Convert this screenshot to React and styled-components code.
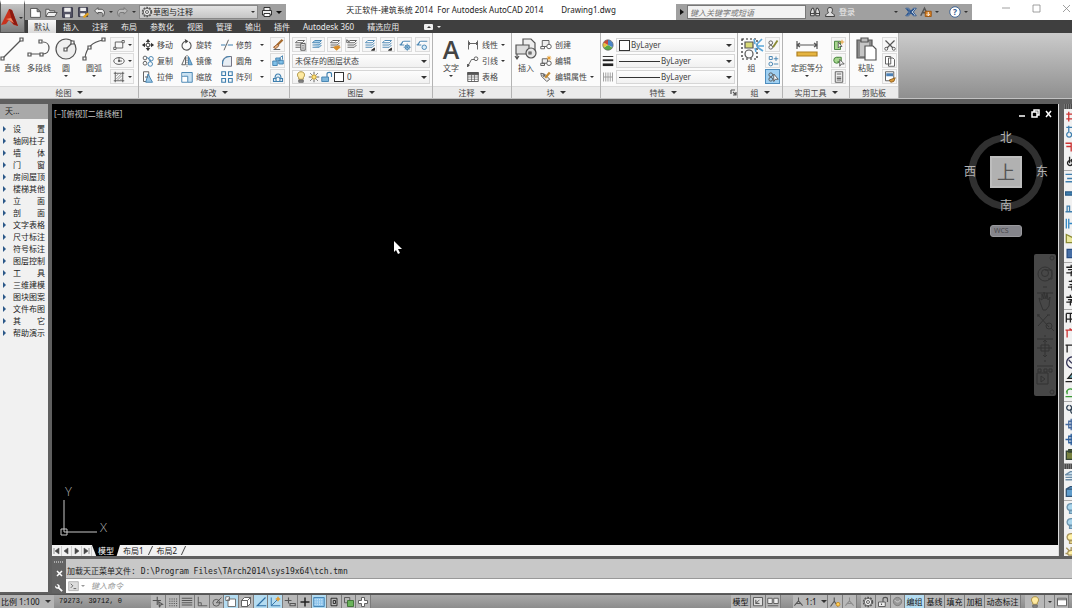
// App.jsx
import React from "react";
import styled, { createGlobalStyle } from "styled-components";

const GlobalStyle = createGlobalStyle`
  * {
    box-sizing: border-box;
  }

  body {
    margin: 0;
    background: #5f5f5f;
    font-family: "Noto Sans", "Noto Sans CJK SC", sans-serif;
    font-size: 8px;
    line-height: 12px;
    color: #444;
  }

  button,
  input,
  select {
    margin: 0;
    padding: 0;
    border: 0;
    background: none;
    color: inherit;
    font: inherit;
    min-width: 0;
  }
`;

const Window = styled.div`
  height: 100vh;
  display: flex;
  flex-direction: column;
`;

/* ---------- shared ---------- */

const Svg = styled.svg`
  display: block;
  flex: none;
  width: ${(p) => p.$w || 14}px;
  height: ${(p) => p.$h || p.$w || 14}px;
  fill: none;
  stroke: #555;
  stroke-width: 1.2;
`;

const Caret = styled.span`
  flex: none;
  width: 0;
  height: 0;
  border: solid transparent;
  border-width: ${(p) => (p.$small ? 2 : 3)}px;
  border-top-color: ${(p) => p.$color || "#333"};
  border-bottom-width: 0;
`;

const B = "#3f7fae";

const icons = {
  newFile: <path d="M2 3h8l4 4v7H2z M10 3v4h4" fill="#fff" />,
  open: <path d="M1 13V4h4l1 2h6v2 M1 13l3-5h11l-3 5z" fill="#eee" />,
  save: (
    <>
      <path d="M2 2h12v12H2z" fill="#556" stroke="#334" />
      <path d="M4 2h8v5H4z M5 10h6v4H5z" fill="#eee" stroke="none" />
    </>
  ),
  saveAs: (
    <>
      <path d="M2 2h11v11H2z" fill="#556" stroke="#334" />
      <path d="M4 2h7v4H4z M4 9h6v4H4z" fill="#eee" stroke="none" />
      <path d="M8 14l6-5" stroke="#e0a020" strokeWidth="3" />
    </>
  ),
  undo: <path d="M6 2L2 6l4 4V8h4c2 0 3 2 2 5 4-3 2-9-2-9H6z" fill="#eee" />,
  redo: <path d="M10 2l4 4-4 4V8H6c-2 0-3 2-2 5-4-3-2-9 2-9h4z" fill="#bbb" stroke="#777" />,
  gear: (
    <>
      <circle cx="8" cy="8" r="6" strokeDasharray="2.4 1.4" strokeWidth="2" />
      <circle cx="8" cy="8" r="5" fill="#eee" />
      <circle cx="8" cy="8" r="2" />
    </>
  ),
  print: (
    <>
      <path d="M4 6V2h8v4 M2 6h12v6H2z" fill="#eee" stroke="#222" />
      <path d="M4 10h8v4H4z" fill="#fff" stroke="#222" />
    </>
  ),
  binoculars: <path d="M2 13V8l2-5h2l1 4v6z M14 13V8l-2-5h-2l-1 4v6z M7 8h2 M2 10h5 M9 10h5" fill="#ddd" stroke="#333" />,
  user: <path d="M8 2c5 0 3 6 2 7 1 1 4 1 4 5H2c0-4 3-4 4-5-1-1-3-7 2-7z" fill="#ddd" stroke="#333" />,
  exchange: (
    <>
      <path d="M1 3h4l3 4 3-4h4l-4 5 4 5h-4L8 9l-3 4H1l4-5z" fill="#fff" stroke="#27518a" />
      <path d="M3 4l9 8 M12 4l-9 8" stroke="#27518a" strokeWidth="2" />
    </>
  ),
  connect: (
    <>
      <path d="M1 13L6 3l3 6 M4 9h4" stroke="#555" strokeWidth="2" />
      <path d="M7 7h8v7H7z" fill="#d98324" stroke="#995211" />
      <path d="M11 8v4 M9 11l2 2 2-2" stroke="#fff" />
    </>
  ),
  line: (
    <>
      <path d="M3 21L21 3" />
      <path d="M1 20h3v3H1z M20 1h3v3h-3z" fill="#fff" />
    </>
  ),
  pline: (
    <>
      <path d="M3 17h13c8 0 8-12 0-12" />
      <path d="M1 16h3v3H1z M13 16h3v3h-3z M12 3h3v3h-3z" fill="#fff" />
    </>
  ),
  circle: (
    <>
      <circle cx="12" cy="12" r="10" fill="#efefef" />
      <path d="M12 12l6-6" />
      <path d="M10 11h3v3h-3z M17 4h3v3h-3z" fill="#fff" />
    </>
  ),
  arc: (
    <>
      <path d="M3 21C4 12 10 5 21 3" />
      <path d="M1 20h3v3H1z M6 9h3v3H6z M20 1h3v3h-3z" fill="#fff" />
    </>
  ),
  rect: (
    <>
      <path d="M3 4h10v8H3z" />
      <path d="M1 11h3v3H1z M12 2h3v3h-3z" fill="#fff" />
    </>
  ),
  ellipse: (
    <>
      <ellipse cx="8" cy="8" rx="7" ry="4.5" />
      <path d="M8 3v5h4" />
      <circle cx="8" cy="8" r="1" fill="#444" />
    </>
  ),
  hatch: (
    <>
      <path d="M3 1v14 M13 1v14 M1 3h14 M1 13h14" />
      <path d="M4 7l3-3 M4 11l7-7 M6 12l6-6 M10 12l2-2" strokeWidth=".8" />
    </>
  ),
  move: (
    <>
      <path d="M8 1v14 M1 8h14" strokeWidth="1.6" />
      <path d="M8 0l3 4H5z M8 16l3-4H5z M0 8l4-3v6z M16 8l-4-3v6z" fill="#333" stroke="none" />
      <path d="M6 6h4v4H6z" fill="#fff" />
    </>
  ),
  rotate: (
    <>
      <path d="M6 3a6 6 0 1 0 5 1" strokeWidth="1.5" />
      <path d="M5 0l5 3-4 3z" fill="#444" stroke="none" />
    </>
  ),
  trim: (
    <>
      <path d="M0 8h6 M9 8h7" stroke={B} strokeWidth="1.5" />
      <path d="M4 15L10 1" />
    </>
  ),
  copy: (
    <>
      <circle cx="4" cy="4" r="2.5" />
      <circle cx="4" cy="11" r="2.5" />
      <circle cx="12" cy="5" r="3" stroke={B} />
      <circle cx="11" cy="12" r="3" stroke={B} />
      <path d="M6 3l5 3v3" stroke={B} />
    </>
  ),
  mirror: (
    <>
      <path d="M6 2v11H1z" />
      <path d="M10 2v11h5z" fill="#7fb2d6" stroke={B} />
      <path d="M8 0v16" strokeDasharray="2 1" />
    </>
  ),
  fillet: (
    <>
      <path d="M2 15V10C2 5 6 2 10 2h4v13z" fill="#e8eef4" stroke="#667" />
      <path d="M2 12C2 6 6 2 12 2" stroke={B} strokeWidth="1.5" />
    </>
  ),
  stretch: (
    <>
      <path d="M2 1h7v13H2z" />
      <path d="M8 4l6 11H5z" fill="#9cc8e6" stroke={B} />
      <path d="M4 8h4" />
    </>
  ),
  scale: (
    <>
      <path d="M1 2h14v13H9" stroke={B} fill="#c9e2f3" />
      <path d="M1 7h8v8H1z" fill="#fff" stroke={B} />
      <path d="M1 2v5" stroke={B} />
    </>
  ),
  array: <path d="M1 1h5v5H1z M10 1h5v5h-5z M1 10h5v5H1z M10 10h5v5h-5z" stroke={B} strokeWidth="1.5" />,
  erase: (
    <>
      <path d="M14 1L7 8" stroke="#a66a2c" strokeWidth="3" />
      <path d="M7 7l2 2-4 4-3-2z" fill="#e9b27c" stroke="#8a4c20" />
      <path d="M2 14h9" />
    </>
  ),
  explode: (
    <>
      <path d="M1 8h6v6H1z M9 7h6v5H9z M5 4h6v3H5z" fill="#7fc0e8" stroke={B} />
      <path d="M10 4l4-3v5" stroke={B} />
    </>
  ),
  offset: <path d="M2 14h12V10h-2c0-8-8-8-8 0H2z M6 14c-2-3 0-6 2-6s4 3 2 6" stroke={B} strokeWidth="1.5" fill="#e4f0f8" />,
  sun: (
    <>
      <circle cx="8" cy="8" r="3" fill="#ffe27a" stroke="#a98220" />
      <path d="M8 1v3 M8 12v3 M1 8h3 M12 8h3 M3 3l2 2 M11 11l2 2 M13 3l-2 2 M5 11l-2 2" />
    </>
  ),
  bulb: (
    <>
      <path d="M8 1c5 0 6 5 3 8v2H5V9C2 6 3 1 8 1z" fill="#ffeaa0" stroke="#a58a3a" />
      <path d="M5 12h6v3H5z" fill="#888" stroke="#666" />
    </>
  ),
  unlock: (
    <>
      <path d="M1 8h9v6H1z" fill="#7fb7dc" stroke={B} />
      <path d="M8 8V4c0-3 6-3 6 0v4" stroke={B} strokeWidth="1.5" />
    </>
  ),
  unlockGray: (
    <>
      <path d="M2 8h9v6H2z" fill="#eee" />
      <path d="M8 8V4c0-3 6-3 6 0v4 M6 10v2" strokeWidth="1.5" />
    </>
  ),
  dim: <path d="M2 2v12 M14 2v12 M2 6h12 M4 4L2 6l2 2 M12 4l2 2-2 2" />,
  leader: (
    <>
      <path d="M1 15l5-9h4" />
      <path d="M0 16l1-4 2 2z" fill="#444" />
      <circle cx="12" cy="5" r="2.5" />
    </>
  ),
  table: (
    <>
      <path d="M1 2h14v12H1z" fill="#fff" />
      <path d="M1 2h14v3H1z" fill="#555" />
      <path d="M1 8h14 M1 11h14 M6 5v9 M10 5v9" strokeWidth=".9" />
    </>
  ),
  insert: (
    <>
      <path d="M9 2h8l4 4v8H9z" fill="#eee" />
      <path d="M2 8h13v9H2z" fill="#ddd" />
      <circle cx="17" cy="16" r="5" fill="#e6e6e6" />
      <path d="M3 17v4 M1 19l2 3 2-3 M15 15h2v2h-2z" />
    </>
  ),
  create: (
    <>
      <path d="M3 2h9v8H3z" fill="#eee" />
      <circle cx="12" cy="10" r="3" fill="#fff" />
      <path d="M1 10h5v3H1z" fill="#fff" />
    </>
  ),
  editBlock: (
    <>
      <path d="M3 5h7v6H3z M1 11h5v3H1z" fill="#eee" />
      <circle cx="12" cy="11" r="3" fill="#fff" />
      <path d="M12 1v6 M9 4h6 M10 2l4 4 M14 2l-4 4" stroke="#e39a2d" />
    </>
  ),
  editAttr: (
    <>
      <path d="M1 3l5 1 7 7-4 3-7-7z" fill="#eee" />
      <path d="M13 2L7 9" stroke="#c58a30" strokeWidth="3" />
      <path d="M4 5h2v2H4z" />
    </>
  ),
  wheel: (
    <>
      <path d="M8 8V1a7 7 0 0 1 6 10z" fill="#4a86c8" stroke="none" />
      <path d="M8 8l6 3.5A7 7 0 0 1 2 11.5z" fill="#5aa845" stroke="none" />
      <path d="M8 8L2 11.5A7 7 0 0 1 2 4.5z" fill="#e7c33a" stroke="none" />
      <path d="M8 8L2 4.5A7 7 0 0 1 8 1z" fill="#c94b38" stroke="none" />
      <circle cx="8" cy="8" r="7" strokeWidth=".8" />
    </>
  ),
  weight: (
    <>
      <path d="M1 2h14" stroke="#222" />
      <path d="M1 7h14" strokeWidth="2.5" stroke="#222" />
      <path d="M1 13h14" strokeWidth="3.5" stroke="#222" />
    </>
  ),
  linetype: <path d="M2 2v12 M5 2v12 M8 2v12 M11 2v12 M14 2v12 M2 8h12" stroke="#999" />,
  group: (
    <>
      <path d="M2 2h15v20H2z" strokeDasharray="2 2" stroke="#222" />
      <path d="M5 5h8v6H5z" fill="#d9da77" />
      <circle cx="9" cy="17" r="4" />
      <path d="M16 8l6-6 M16 9h8 M17 10l6 4 M15 7l-1-5 M15 11l1 4" stroke="#5ba6d8" strokeWidth="1.6" />
    </>
  ),
  groupEdit: (
    <>
      <circle cx="5" cy="5" r="2.5" />
      <circle cx="5" cy="11" r="2.5" />
      <path d="M14 2L8 11" stroke="#8b8b35" strokeWidth="2.5" />
    </>
  ),
  groupAdd: (
    <>
      <path d="M3 2h4v4H3z" stroke={B} />
      <circle cx="5" cy="12" r="2.5" stroke={B} />
      <path d="M12 2v6 M9 5h6 M9 12h6" stroke={B} />
    </>
  ),
  groupSelect: (
    <>
      <circle cx="5" cy="5" r="2.5" />
      <circle cx="5" cy="11" r="2.5" />
      <path d="M9 4v10l2-3h4z" fill="#fff" />
    </>
  ),
  measure: (
    <>
      <path d="M2 4v8 M22 4v8 M2 8h20 M5 6L2 8l3 2 M19 6l3 2-3 2" />
      <path d="M2 15h20v4H2z" fill="#e5b440" stroke="#b08020" />
    </>
  ),
  quickSelect: (
    <>
      <path d="M2 3h8v11H2z" fill="#a6d68e" stroke="#3f7d35" />
      <path d="M7 4v8l2-2h3z" fill="#fff" />
      <path d="M12 1v6 M9 4h6" stroke="#e39a2d" />
    </>
  ),
  selectSimilar: (
    <>
      <circle cx="5" cy="7" r="4" fill="#a6d68e" stroke="#3f7d35" />
      <path d="M5 3h6v6H6" fill="#a6d68e" stroke="#3f7d35" />
      <path d="M9 6v9l2-3h4z" fill="#fff" />
    </>
  ),
  calc: (
    <>
      <path d="M3 1h10v14H3z" fill="#f2f2f2" />
      <path d="M5 4h6 M5 8h6 M5 10h6 M5 12h6" />
    </>
  ),
  paste: (
    <>
      <path d="M3 3h15v18H3z" fill="#8a8a8a" />
      <path d="M6 5h9v14H6z" fill="#c5c5c5" stroke="none" />
      <path d="M7 1h7v4H7z" fill="#bbb" />
      <path d="M11 9h8l3 3v11H11z" fill="#fff" />
    </>
  ),
  cut: (
    <>
      <path d="M2 2l10 10 M14 2L4 12" strokeWidth="1.6" />
      <circle cx="3" cy="13" r="2" />
      <circle cx="13" cy="13" r="2" />
    </>
  ),
  pages: <path d="M2 2h7v10H2z M6 4h6l2 2v9H6z" fill="#fff" />,
  matchProps: (
    <>
      <path d="M2 1h11v12H2z" fill="#fff" />
      <path d="M3 3h9v4H3z" fill="#4b80b5" stroke="none" />
      <path d="M7 12l8-3-2 5-4 1z" fill="#d99a3c" stroke="#8f5f1d" />
    </>
  ),
  snap: <path d="M1 6h11 M7 1v11 M9 8l5 3-3 1-1 3z" fill="#eee" strokeWidth="1.5" />,
  dots: <path d="M3 4h11 M3 7h11 M3 10h11 M3 13h11" strokeDasharray="1.5 1.5" strokeWidth="1.5" />,
  gridLines: <path d="M1 3h14 M1 6h14 M1 9h14 M1 12h14" strokeWidth="1.5" />,
  ortho: <path d="M3 1v12h12 M3 9h4v4" />,
  polar: (
    <>
      <circle cx="7" cy="9" r="4.5" />
      <path d="M7 9l7-7 M7 9h8" />
    </>
  ),
  osnap: <path d="M4 4h10v10H4z M1 1h5v5H1z" fill="#fff" stroke="#666" />,
  osnap3d: <path d="M2 6h8v8H2z M2 6l4-4h8v8l-4 4 M10 6l4-4" fill="#fff" />,
  track: <path d="M14 2L3 13h12" strokeWidth="1.5" stroke="#2d6da3" />,
  ducs: (
    <>
      <path d="M3 2v11h12 M3 13l9-9" stroke="#2d6da3" />
      <path d="M12 1v6 M9 4h6" stroke="#e39a2d" strokeWidth="2" />
    </>
  ),
  dyn: <path d="M1 6h9 M6 2v8 M8 10h7v3H8z" strokeWidth="1.5" />,
  plus: <path d="M8 2v12 M2 8h12" strokeWidth="2" stroke="#222" />,
  transparency: (
    <>
      <path d="M1 2h14v12H1z" fill="#8cc4ec" stroke={B} />
      <path d="M2 5h12 M2 8h12 M2 11h12" stroke="#e7f4fc" strokeDasharray="1.5 1.5" />
    </>
  ),
  props: <path d="M4 3h8v10H4z M7 6h3v4H7z" stroke="#222" />,
  cycle: (
    <>
      <path d="M2 2h7v7H2z" />
      <path d="M6 6h8v8H6z" fill="#6ab35a" stroke="#3a6f31" />
    </>
  ),
  cross: <path d="M6 2h4v4h4v4h-4v4H6v-4H2V6h4z" fill="#fff" />,
  modelSpace: <path d="M2 2h12v11H2z M5 5v5h5 M5 10l5-5" fill="#ddd" />,
  viewports: <path d="M1 3h6v7H1z M9 3h6v7H9z M1 13h14" fill="#eee" />,
  person: <path d="M8 2v5 M8 7L2 14 M8 7l6 7 M4 11h8" strokeWidth="1.5" />,
  personFaded: <path d="M8 2v5 M8 7L2 14 M8 7l6 7 M4 11h8" strokeWidth="1.5" stroke="#8c8c8c" />,
  personStar: (
    <>
      <path d="M7 2v5 M7 7L2 14 M7 7l5 7" strokeWidth="1.5" />
      <circle cx="12" cy="11" r="2.5" fill="#ffcf5a" stroke="#c98e24" />
    </>
  ),
  sphere: (
    <>
      <circle cx="8" cy="8" r="6" fill="#999" stroke="#777" />
      <path d="M4 6c3 4 6 3 8 0" stroke="#ddd" />
    </>
  ),
  clean: <path d="M2 3h12v10H2z M2 5h12" fill="#fff" />,
  wrench: <path d="M4 2l3 3-2 2-3-3c-1 4 2 6 5 5l5 5 2-2-5-5c1-3-1-6-5-5z" fill="#fff" stroke="none" />,
  prompt: (
    <>
      <path d="M1 1h14v13H1z" fill="#ddd" stroke="#aaa" />
      <path d="M4 4l3 3-3 3 M8 11h4" />
    </>
  ),
};

const Icon = ({ name, w, h, box = 16 }) => (
  <Svg $w={w} $h={h} viewBox={`0 0 ${box} ${box}`} aria-hidden="true">
    {icons[name]}
  </Svg>
);

/* ---------- title bar ---------- */

const Header = styled.header`
  flex: none;
  display: grid;
  grid-template-columns: 25px 1fr;
  grid-template-rows: 20px 13px;
  background: #3f3f3f;
`;

const AppButton = styled.button`
  grid-row: 1 / 3;
  display: flex;
  align-items: center;
  gap: 1px;
  border: 1px solid #555;
  border-top: 4px solid #fff;
  background: linear-gradient(#c4c4c4, #7c7c7c);
`;

const TitleRow = styled.div`
  display: flex;
  align-items: stretch;
  padding-top: 4px;
  background: #fff;
`;

const ToolStrip = styled.div`
  display: flex;
  align-items: center;
  gap: 3px;
  padding: 0 4px;
  background: #a0a0a0;
  color: #eee;
`;

const ToolButton = styled.button`
  display: flex;
  align-items: center;
  gap: 3px;
`;

const Workspace = styled.label`
  display: flex;
  align-items: center;
  width: 119px;
  height: 14px;
  padding: 0 2px 0 1px;
  background: linear-gradient(#e4e4e4, #c6c6c6);
  border: 1px solid #888;
  color: #222;
`;

const BareSelect = styled.select`
  flex: 1;
  appearance: none;
  outline: none;
  height: 12px;
`;

const Title = styled.h1`
  flex: 1;
  margin: 0;
  display: flex;
  justify-content: center;
  gap: 18px;
  font-size: 8px;
  line-height: 12px;
  font-weight: 400;
  color: #222;
  white-space: pre;
`;

const SearchInput = styled.input`
  width: 119px;
  height: 14px;
  padding: 0 2px;
  background: #f2f2f2;
  border: 1px solid #777;
  font-style: italic;

  &::placeholder {
    color: #777;
  }
`;

const Spacer = styled.span`
  flex: ${(p) => (p.$w ? "none" : 1)};
  width: ${(p) => p.$w || 0}px;
`;

const WindowButtons = styled.div`
  display: flex;
  justify-content: space-between;
  align-items: center;
  width: 100px;
  padding: 0 1px 8px 30px;
`;

const Tabs = styled.nav`
  display: flex;
  gap: 1px;
  padding-left: 3px;
`;

const Tab = styled.button`
  padding: 0 6px;
  height: 13px;
  white-space: nowrap;
  color: ${(p) => (p.$active ? "#333" : "#ececec")};
  background: ${(p) => (p.$active ? "linear-gradient(#f8f8f8, #d8d8d8)" : "none")};
`;

const TabToggle = styled.button`
  display: flex;
  align-items: center;
  gap: 4px;
  margin-left: 18px;
`;

/* ---------- ribbon ---------- */

const Ribbon = styled.section`
  flex: none;
  display: flex;
  height: 66px;
  background: linear-gradient(#cbcbcb, #8f8f8f);
  border-bottom: 1px solid #c2c2c2;
`;

const Panel = styled.div`
  width: ${(p) => p.$w}px;
  display: flex;
  flex-direction: column;
  background: #fbfbfb;
  border-right: 1px solid #b4b4b4;
`;

const PanelBody = styled.div`
  flex: 1;
  display: flex;
  padding: 4px ${(p) => p.$right || 2}px 0 ${(p) => p.$left || 0}px;
`;

const PanelTitle = styled.button`
  height: 12px;
  display: flex;
  align-items: center;
  gap: 5px;
  background: #ebebeb;
  border-top: 1px solid #dadada;
`;

const BigButton = styled.button`
  width: ${(p) => p.$w || 28}px;
  flex: none;
  height: 44px;
  display: flex;
  flex-direction: column;
  align-items: center;
  white-space: nowrap;
`;

const BigLabel = styled.span`
  height: 14px;
  line-height: 14px;
`;

const Column = styled.div`
  display: flex;
  flex-direction: column;
  flex: ${(p) => (p.$w ? "none" : 1)};
  width: ${(p) => (p.$w ? `${p.$w}px` : "auto")};
`;

const Row = styled.div`
  height: 16px;
  display: flex;
  align-items: center;
  justify-content: space-between;
`;

const SmallButton = styled.button`
  height: 16px;
  display: flex;
  align-items: center;
  gap: 3px;
  white-space: nowrap;
`;

const SquareButton = styled.button`
  width: ${(p) => p.$w || 15}px;
  height: 15px;
  margin-bottom: 1px;
  display: flex;
  align-items: center;
  justify-content: center;
  gap: 3px;
  border: 1px solid ${(p) => (p.$active ? "#4e8dbd" : "#dcdcdc")};
  background: ${(p) => (p.$active ? "#9fd0f2" : "#f7f7f7")};
`;

const Combo = styled.label`
  flex: 1;
  height: 14px;
  display: flex;
  align-items: center;
  gap: 1px;
  padding: 0 2px;
  border: 1px solid #d6d6d6;
  background: linear-gradient(#fdfdfd, #f1f1f1);
`;

const Swatch = styled.span`
  width: ${(p) => p.$w || 11}px;
  height: ${(p) => p.$w || 11}px;
  background: #fff;
  border: 1px solid #333;
`;

const LineSample = styled.span`
  width: 41px;
  height: 1px;
  background: #333;
`;

const BigA = styled.span`
  height: 24px;
  font: 600 25px/24px "Open Sans", sans-serif;
  color: #444;
`;

const Big = ({ icon, label, w, caret }) => (
  <BigButton $w={w}>
    <Icon name={icon} w={24} box={24} />
    <BigLabel>{label}</BigLabel>
    {caret && <Caret $small />}
  </BigButton>
);

const Small = ({ icon, label, caret, wide }) => (
  <SmallButton>
    <Icon name={icon} w={12} />
    {label}
    {wide && <Spacer $w={2} />}
    {caret && <Caret $small />}
  </SmallButton>
);

const Squares = ({ items, w = 15, active, caret }) => (
  <Column $w={w}>
    {items.map((n) => (
      <SquareButton key={n} $w={w} $active={n === active} aria-label={n}>
        <Icon name={n} w={12} />
        {caret && <Caret $small />}
      </SquareButton>
    ))}
  </Column>
);

const PanelFoot = ({ text, plain, launcher }) => (
  <PanelTitle>
    <Spacer />
    {text}
    {!plain && <Caret />}
    <Spacer />
    {launcher && (
      <Svg $w={7} viewBox="0 0 7 7">
        <path d="M1 1h4 M1 1v4 M3 3l3 3 M6 3v3H3" />
      </Svg>
    )}
  </PanelTitle>
);

const layerTones = ["#555", B, "#d98f2b", "#555", B, B, B, B];

const tabNames = ["默认", "插入", "注释", "布局", "参数化", "视图", "管理", "输出", "插件", "Autodesk 360", "精选应用"];

/* ---------- body ---------- */

const Body = styled.main`
  flex: 1;
  min-height: 0;
  display: flex;
  margin-top: 5px;
`;

const Sidebar = styled.aside`
  width: 48px;
  flex: none;
  margin-right: 4px;
  margin-bottom: 2px;
  background: #f1f1f1;
`;

const SidebarTitle = styled.div`
  height: 15px;
  padding: 1px 5px;
  background: #a9a9a9;
  color: #222;
`;

const Menu = styled.ul`
  list-style: none;
  margin: 0;
  padding: 4px 0 0;
`;

const MenuButton = styled.button`
  width: 100%;
  height: 12px;
  display: flex;
  align-items: center;
  gap: 7px;
  padding-left: 3px;
  color: #222;
  white-space: nowrap;

  &::before {
    content: "";
    border: 3px solid transparent;
    border-left-color: #2b5788;
    border-right-width: 0;
  }
`;

const Work = styled.div`
  flex: 1;
  min-width: 0;
  display: flex;
  flex-direction: column;
`;

const DrawingRow = styled.div`
  flex: 1;
  display: flex;
  gap: 5px;
  min-height: 0;
`;

const Drawing = styled.div`
  flex: 1;
  display: flex;
  flex-direction: column;
  border-right: 1px solid #ddd;
`;

const Canvas = styled.div`
  position: relative;
  flex: 1;
  background: #000;
  color: #c4c4c4;
`;

const ViewLabel = styled.div`
  padding: 4px 2px;
`;

const ViewButtons = styled.div`
  position: absolute;
  top: 5px;
  right: 6px;
`;

const ViewCube = styled.div`
  position: absolute;
  top: 26px;
  right: 10px;
  width: 84px;
  height: 84px;
  display: grid;
  grid-template: 26px 32px 26px / 26px 32px 26px;
  place-items: center;
  font-size: 12px;
  line-height: 16px;
  color: #b4b4b4;
`;

const CubeRing = styled.svg`
  grid-area: 1 / 1 / 4 / 4;
  width: 84px;
  height: 84px;
`;

const CubeLabel = styled.span`
  grid-area: ${(p) => p.$area};
  align-self: ${(p) => p.$v || "center"};
  justify-self: ${(p) => p.$h || "center"};
`;

const CubeFace = styled.button`
  grid-area: 2 / 2;
  width: 32px;
  height: 32px;
  background: #b1b1b1;
  border: 2px solid #bdbdbd;
  color: #555;
  font-size: 18px;
  line-height: 24px;
`;

const Wcs = styled.button`
  position: absolute;
  top: 121px;
  right: 36px;
  width: 32px;
  height: 12px;
  padding-left: 3px;
  border-radius: 3px;
  background: #85858b;
  border: 1px solid #9a9a9e;
  color: #4a4a4e;
  font-size: 7px;
  line-height: 10px;
  text-align: left;
`;

const NavBar = styled.svg`
  position: absolute;
  top: 150px;
  right: 2px;
  width: 22px;
  height: 142px;
  fill: none;
  stroke: #333;
`;

const Pointer = styled.svg`
  position: absolute;
  top: 137px;
  left: 342px;
  width: 8px;
  height: 14px;
`;

const Ucs = styled.svg`
  position: absolute;
  left: 8px;
  bottom: 7px;
  width: 54px;
  height: 60px;
  fill: none;
  stroke: #c8c8c8;

  text {
    fill: #b0b0b0;
    stroke: none;
    font: 300 13px "Open Sans", sans-serif;
  }
`;

const LayoutTabs = styled.div`
  height: 11px;
  display: flex;
  align-items: center;
  background: #f1f1f1;
  color: #222;
`;

const LayoutTab = styled.button`
  height: 11px;
  line-height: 11px;
  padding: 0 ${(p) => (p.$active ? 6 : 3)}px;
  background: ${(p) => (p.$active ? "#000" : "none")};
  color: ${(p) => (p.$active ? "#fff" : "#222")};
  clip-path: ${(p) => (p.$active ? "polygon(0 0, 100% 0, 88% 100%, 15% 100%)" : "none")};
`;

const Slash = styled.span`
  width: 1px;
  height: 9px;
  margin: 0 3px;
  background: #444;
  transform: skewX(-25deg);
`;

const StepButton = styled.button`
  width: 10px;
  height: 10px;
  border-right: 1px solid #ccc;
`;

const SideTools = styled.div`
  width: 8px;
  flex: none;
  overflow: hidden;
  background: #f1f1f1;
`;

const Grip = styled.div`
  height: 5px;
  background: repeating-linear-gradient(90deg, #777 0 1px, #4c4c4c 1px 2px);
`;

const ToolGroup = styled.div`
  padding-bottom: 1px;
  border-bottom: 1px solid #aaa;
`;

const SideTool = styled.button`
  display: block;
  width: 16px;
  height: 15px;
  padding-left: 1px;
`;

const CommandPanel = styled.div`
  flex: none;
  display: flex;
  margin-top: 3px;
  height: 35px;
  padding-bottom: 1px;
`;

const CommandGrip = styled.div`
  width: 14px;
  display: flex;
  flex-direction: column;
  align-items: center;
  justify-content: space-between;
  padding: 2px 0 0;
  background: #636363;
`;

const CommandBody = styled.div`
  flex: 1;
  display: flex;
  flex-direction: column;
`;

const History = styled.div`
  height: 20px;
  padding: 7px 1px 0;
  background: #c8c8c8;
  border-bottom: 1px solid #999;
  color: #222;
  font-family: "DejaVu Sans Mono", "Noto Sans CJK SC", monospace;
`;

const Prompt = styled.label`
  flex: 1;
  display: flex;
  align-items: center;
  gap: 2px;
  padding-left: 2px;
  background: #fff;
`;

const CommandInput = styled.input`
  flex: 1;
  margin-left: 4px;
  outline: none;
  font-style: italic;

  &::placeholder {
    color: #999;
  }
`;

/* ---------- status bar ---------- */

const StatusBar = styled.footer`
  flex: none;
  height: 14px;
  display: flex;
  align-items: stretch;
  background: linear-gradient(#a9a9a9, #8c8c8c);
  border-top: 1px solid #555;
  color: #111;
  white-space: nowrap;
`;

const ScaleButton = styled.button`
  width: 54px;
  display: flex;
  align-items: center;
  justify-content: space-between;
  padding: 0 3px 0 1px;
  background: #b5b5b5;
`;

const Coords = styled.output`
  width: 97px;
  padding-left: 5px;
  font: 7px/13px "Liberation Mono", monospace;
`;

const Toggles = styled.div`
  width: 220px;
  display: flex;
`;

const StatusButton = styled.button`
  flex: ${(p) => (p.$w ? "none" : 1)};
  width: ${(p) => p.$w || 0}px;
  display: flex;
  align-items: center;
  justify-content: center;
  gap: 1px;
  background: ${(p) => (p.$active ? "#b4dcf1" : "#b8b8b8")};
  border-right: 1px solid #7c7c7c;
`;

const menu = [
  "设　　置", "轴网柱子", "墙　　体", "门　　窗", "房间屋顶", "楼梯其他",
  "立　　面", "剖　　面", "文字表格", "尺寸标注", "符号标注", "图层控制",
  "工　　具", "三维建模", "图块图案", "文件布图", "其　　它", "帮助演示",
];

const toggles = [
  ["snap"], ["dots"], ["gridLines"], ["ortho"], ["polar"],
  ["osnap", true], ["osnap3d"], ["track", true], ["ducs", true],
  ["dyn"], ["plus"], ["transparency", true], ["props"], ["cycle"], ["cross"],
];

// [stroke path, stroke colour, fill]
const R = "#c33";
const K = "#222";
const sideTools = [
  [
    ["M1 5h14 M1 11h14 M4 2v12 M11 2v12", R],
    ["M1 3h14 M4 1v8 M4 9a3 3 0 1 0 1 0", B],
    ["M0 4h7v4H1 M7 9v5", R],
    ["M5 2v8 M5 7a3 3 0 1 0 1 0 M7 5l5 8", K],
  ],
  [
    ["M0 3h14 M0 12h14 M2 8h8", B],
    ["M0 6h14v4H0z", "#2c5e8a", B],
    ["M0 12h14 M2 12V5h3v7", B],
    ["M1 2v12 M4 2v12 M5 8h6", "#3187c4"],
    ["M1 13V3l10 5v5z", "#8a8a35", "#e9e79c"],
    ["M2 3h12v10H2z", "#274d82", "#466ea5"],
  ],
  [
    ["M1 4h12 M7 1v3 M3 7h8L7 10v5 M1 11h12", K],
    ["M4 3h9 M8 1v3 M5 7h6L8 9v5 M3 10h10", K],
    ["M1 4h10 M6 1v3 M3 7h6L6 9v5 M1 10h10", K],
  ],
  [
    ["M1 3v11 M6 3v11 M1 10h13 M1 3h12", K],
    ["M0 5h14 M2 5v9 M5 3l5 4", R],
    ["M0 5h14 M2 5v9", K],
    ["M8 1a7 7 0 1 0 1 0 M4 5l4 4", "#335"],
    ["M0 13h14 M3 9l5-6 4 6z", K, "#6aa7b5"],
    ["M1 8c2-6 8-6 10 0 M0 13h14 M2 5v5", "#3b9b36"],
  ],
  [
    ["M4 3a3 3 0 1 0 1 0 M9 7a3 3 0 1 0 1 0", "#345"],
    ["M7 1v14 M0 8h14 M4 4h6v8H4z", "#456a9f"],
    ["M7 1v14 M0 8h14 M4 4h6v8H4z", "#2c5e9a"],
    ["M1 4h12v10H1z M4 2h6v3H4z", "#343", "#77813f"],
  ],
];

const sideTools2 = [
  [
    ["M0 6l6-4h8l-5 4z M0 9h9l5-3 M0 12h9l5-3", "#6a8ba5", "#c7dfef"],
    ["M1 5l5-3h8v8l-5 4H1z M1 5h8v9", "#357", "#5f9ccb"],
  ],
  [
    ["M7 2c6 0 6 6 3 8H4C1 8 1 2 7 2z M5 11h5v3H5z", "#6b93ad", "#a9d5ec"],
    ["M7 2c6 0 6 6 3 8H4C1 8 1 2 7 2z M5 11h5v3H5z", "#6b93ad", "#a9d5ec"],
    ["M7 2c6 0 6 6 3 8H4C1 8 1 2 7 2z M5 11h5v3H5z", "#a6935a", "#fff0a4"],
    ["M7 4c5 0 5 5 3 6H4C2 9 2 4 7 4z M1 1l3 3 M7 0v3 M0 8h2", "#a6935a", "#fff0a4"],
  ],
];

const ToolGroups = ({ groups }) =>
  groups.map((group, g) => (
    <ToolGroup key={g}>
      {group.map(([d, stroke, fill], i) => (
        <SideTool key={i} aria-label={`tool ${g + 1}-${i + 1}`}>
          <Svg $w={14} $h={13} viewBox="0 0 16 16">
            <path d={d} stroke={stroke} fill={fill || "none"} strokeWidth="1.6" />
          </Svg>
        </SideTool>
      ))}
    </ToolGroup>
  ));

const TitleBar = () => (
  <Header>
    <AppButton aria-label="menu">
      <Svg $w={17} $h={20} viewBox="0 0 17 20">
        <path d="M8 1L0 17l5-1 3-4 5 5 4 1L11 2z" fill="#c8321e" stroke="none" />
        <path d="M8 1l3 1 6 16-5-2z" fill="#8c1a10" stroke="none" />
        <path d="M5 11l5-1 3 5-5-3z" fill="#f08a68" stroke="none" />
      </Svg>
      <Caret $small />
    </AppButton>
    <TitleRow>
      <ToolStrip>
        {["newFile", "open", "save", "saveAs"].map((n) => (
          <ToolButton key={n} aria-label={n}>
            <Icon name={n} w={13} />
          </ToolButton>
        ))}
        <ToolButton aria-label="undo">
          <Icon name="undo" w={13} />
          <Caret $small />
        </ToolButton>
        <ToolButton aria-label="redo">
          <Icon name="redo" w={13} />
          <Caret $small />
        </ToolButton>
        <Workspace>
          <Icon name="gear" w={12} />
          <BareSelect aria-label="workspace">
            <option>草图与注释</option>
          </BareSelect>
          <Caret $small />
        </Workspace>
        <ToolButton aria-label="print">
          <Icon name="print" w={12} />
        </ToolButton>
        <Caret $color="#111" />
      </ToolStrip>
      <Title>
        <span>天正软件-建筑系统 2014  For Autodesk AutoCAD 2014</span>
        <span>Drawing1.dwg</span>
      </Title>
      <ToolStrip>
        <Svg $w={4} $h={6} viewBox="0 0 4 6">
          <path d="M0 0l4 3-4 3z" fill="#111" stroke="none" />
        </Svg>
        <SearchInput aria-label="search" placeholder="键入关键字或短语" />
        <ToolButton aria-label="find">
          <Icon name="binoculars" w={12} />
        </ToolButton>
        <ToolButton>
          <Icon name="user" w={12} />
          登录
        </ToolButton>
        <Spacer $w={33} />
        <Caret $small />
        <Spacer $w={1} />
        <ToolButton aria-label="exchange">
          <Icon name="exchange" w={12} />
        </ToolButton>
        <ToolButton aria-label="connect">
          <Icon name="connect" w={12} />
          <Caret $small />
        </ToolButton>
        <Spacer $w={4} />
        <ToolButton aria-label="help">
          <Svg $w={12} viewBox="0 0 16 16">
            <circle cx="8" cy="8" r="7" fill="#fff" stroke="#335b8e" />
            <text x="8" y="12" textAnchor="middle" fontSize="11" fontWeight="700" fill="#335b8e" stroke="none">?</text>
          </Svg>
          <Caret $small />
        </ToolButton>
      </ToolStrip>
      <WindowButtons>
        {["M0 4h8", "M1 1h7v7H1z", "M1 1l7 7 M8 1L1 8"].map((d) => (
          <button key={d} aria-label="window">
            <Svg $w={9} viewBox="0 0 9 9">
              <path d={d} stroke="#888" strokeWidth=".8" />
            </Svg>
          </button>
        ))}
      </WindowButtons>
    </TitleRow>
    <Tabs>
      {tabNames.map((name, i) => (
        <Tab key={name} $active={i === 0}>{name}</Tab>
      ))}
      <TabToggle aria-label="collapse">
        <Svg $w={9} $h={6} viewBox="0 0 9 6">
          <rect width="9" height="6" rx="1" fill="#eee" stroke="none" />
          <path d="M3 4l2-2 2 2z" fill="#333" stroke="none" />
        </Svg>
        <Caret $small $color="#eee" />
      </TabToggle>
    </Tabs>
  </Header>
);

const RibbonBar = () => (
  <Ribbon>
    <Panel $w={139}>
      <PanelBody>
        <Big icon="line" label="直线" w={24} />
        <Big icon="pline" label="多段线" w={30} />
        <Big icon="circle" label="圆" w={24} caret />
        <Big icon="arc" label="圆弧" w={32} caret />
        <Squares items={["rect", "ellipse", "hatch"]} w={24} caret />
      </PanelBody>
      <PanelFoot text="绘图" />
    </Panel>
    <Panel $w={151}>
      <PanelBody $left={3}>
        <Column $w={39}>
          <Small icon="move" label="移动" />
          <Small icon="copy" label="复制" />
          <Small icon="stretch" label="拉伸" />
        </Column>
        <Column $w={40}>
          <Small icon="rotate" label="旋转" />
          <Small icon="mirror" label="镜像" />
          <Small icon="scale" label="缩放" />
        </Column>
        <Column $w={49}>
          <Small icon="trim" label="修剪" caret wide />
          <Small icon="fillet" label="圆角" caret wide />
          <Small icon="array" label="阵列" caret wide />
        </Column>
        <Squares items={["erase", "explode", "offset"]} />
      </PanelBody>
      <PanelFoot text="修改" />
    </Panel>
    <Panel $w={143}>
      <PanelBody $left={2}>
        <Column>
          <Row>
            {layerTones.map((tone, i) => (
              <SquareButton key={i} aria-label={`layer ${i + 1}`}>
                <Svg $w={12} viewBox="0 0 16 16">
                  <path d={i > 5 ? "M1 8l5-5h9 M1 8h6 M5 3L3 8" : "M5 2h9l-3 3H2z M2 8h9l3-3 M2 11h9l3-3"} stroke={i === 2 ? "#555" : tone} fill={i === 1 ? "#a8d1ec" : "#fff"} />
                  {i === 0 && <path d="M9 6h6v9H9z M11 9h2 M11 12h2" fill="#ddd" />}
                  {i === 2 && <path d="M6 11l4 4 5-4-3-2z" fill={tone} stroke={tone} />}
                  {i === 3 && <path d="M1 1l4 3 M1 1v4" />}
                  {(i === 4 || i === 5) && <path d="M10 15l4-3v3z" fill="#333" stroke="#333" />}
                  {i > 5 && <circle cx="11" cy="11" r="3" stroke={B} fill="#d7ecf9" />}
                  {i === 6 && <path d="M11 6v10 M6 11h10 M8 8l6 6 M14 8l-6 6" stroke={B} strokeWidth=".8" />}
                </Svg>
              </SquareButton>
            ))}
          </Row>
          <Row>
            <Combo>
              <BareSelect aria-label="layer state">
                <option>未保存的图层状态</option>
              </BareSelect>
              <Caret />
            </Combo>
          </Row>
          <Row>
            <Combo>
              <Icon name="bulb" w={12} />
              <Icon name="sun" w={12} />
              <Icon name="unlock" w={12} />
              <Swatch $w={10} />
              <Spacer $w={1} />
              <BareSelect aria-label="layer">
                <option>0</option>
              </BareSelect>
              <Caret />
            </Combo>
          </Row>
        </Column>
      </PanelBody>
      <PanelFoot text="图层" />
    </Panel>
    <Panel $w={79}>
      <PanelBody $left={2}>
        <BigButton $w={32}>
          <BigA>A</BigA>
          <BigLabel>文字</BigLabel>
          <Caret $small />
        </BigButton>
        <Column>
          <Small icon="dim" label="线性" caret />
          <Small icon="leader" label="引线" caret />
          <Small icon="table" label="表格" />
        </Column>
      </PanelBody>
      <PanelFoot text="注释" />
    </Panel>
    <Panel $w={89}>
      <PanelBody>
        <Big icon="insert" label="插入" />
        <Column>
          <Small icon="create" label="创建" />
          <Small icon="editBlock" label="编辑" />
          <Small icon="editAttr" label="编辑属性" caret />
        </Column>
      </PanelBody>
      <PanelFoot text="块" />
    </Panel>
    <Panel $w={137}>
      <PanelBody $left={1}>
        <Column>
          {["wheel", "weight", "linetype"].map((n, i) => (
            <Row key={n}>
              <Icon name={n} w={12} />
              <Spacer $w={2} />
              <Combo>
                {i === 0 ? <Swatch /> : <LineSample />}
                <BareSelect aria-label={n}>
                  <option>ByLayer</option>
                </BareSelect>
                <Caret />
              </Combo>
            </Row>
          ))}
        </Column>
      </PanelBody>
      <PanelFoot text="特性" launcher />
    </Panel>
    <Panel $w={45}>
      <PanelBody>
        <Big icon="group" label="组" w={27} />
        <Squares items={["groupEdit", "groupAdd", "groupSelect"]} active="groupSelect" />
      </PanelBody>
      <PanelFoot text="组" />
    </Panel>
    <Panel $w={67}>
      <PanelBody>
        <Big icon="measure" label="定距等分" w={48} caret />
        <Squares items={["quickSelect", "selectSimilar", "calc"]} />
      </PanelBody>
      <PanelFoot text="实用工具" />
    </Panel>
    <Panel $w={49}>
      <PanelBody>
        <Big icon="paste" label="粘贴" w={32} caret />
        <Squares items={["cut", "pages", "matchProps"]} />
      </PanelBody>
      <PanelFoot text="剪贴板" plain />
    </Panel>
  </Ribbon>
);

const DrawingView = () => (
  <Canvas>
    <ViewLabel>[−][俯视][二维线框]</ViewLabel>
    <ViewButtons>
      <Svg $w={34} $h={9} viewBox="0 0 34 9">
        <path d="M1 7h6 M14 3h5v5h-5z M16 3V1h5v5h-2 M28 2l5 6 M33 2l-5 6" stroke="#fff" strokeWidth="1.5" />
      </Svg>
    </ViewButtons>
    <ViewCube>
      <CubeRing viewBox="0 0 84 84">
        <circle cx="42" cy="42" r="34" fill="none" stroke="#303030" strokeWidth="7" />
      </CubeRing>
      <CubeLabel $area="1 / 2" $v="start">北</CubeLabel>
      <CubeLabel $area="2 / 1" $h="start">西</CubeLabel>
      <CubeFace>上</CubeFace>
      <CubeLabel $area="2 / 3" $h="end">东</CubeLabel>
      <CubeLabel $area="3 / 2" $v="end">南</CubeLabel>
    </ViewCube>
    <Wcs>WCS</Wcs>
    <NavBar viewBox="0 0 22 142">
      <rect width="22" height="142" rx="2" fill="#474747" stroke="none" />
      <circle cx="18" cy="4" r="2" />
      <circle cx="11" cy="20" r="7" />
      <circle cx="11" cy="19" r="3.5" />
      <path d="M11 16h7v9h-4 M9 33h4" />
      <path d="M6 48l-1-4 3 2v-6l2 5v-7l2 7 1-6 1 7 2-3-1 9-3 4H9z M3 39h16" />
      <path d="M4 61l11 12 M14 61L4 72 M3 61h3 M13 61h3 M4 60v3" />
      <circle cx="15" cy="72" r="3" />
      <path d="M17 74l3 3 M10 82h2 M10 107h2 M3 85h16" />
      <path d="M11 86v17 M3 94h15 M7 91h8v6H7z M9 88l2-2 2 2 M9 101l2 2 2-2" />
      <path d="M3 112h16 M3 119h11v11H3z M4 115h3v3H4z M10 115h3v3h-3z M15 115h3v3h-3z M7 122l4 3-4 3z" />
      <circle cx="18" cy="138" r="2" />
    </NavBar>
    <Pointer viewBox="0 0 8 14">
      <path d="M0 0v11l2-2 2 4 2-1-2-4h4z" fill="#fff" />
    </Pointer>
    <Ucs viewBox="0 0 54 60">
      <path d="M4 22v32h33 M1 51h6v6H1z" />
      <text x="5" y="18">Y</text>
      <text x="40" y="54">X</text>
    </Ucs>
  </Canvas>
);

const Status = () => (
  <StatusBar>
    <ScaleButton>
      比例 1:100
      <Caret />
    </ScaleButton>
    <Coords>79273, 39712, 0</Coords>
    <Toggles>
      {toggles.map(([n, on]) => (
        <StatusButton key={n} $active={on} aria-label={n}>
          <Icon name={n} w={12} />
        </StatusButton>
      ))}
    </Toggles>
    <Spacer />
    <StatusButton $w={20}>模型</StatusButton>
    <StatusButton $w={15} aria-label="model space"><Icon name="modelSpace" w={12} /></StatusButton>
    <StatusButton $w={15} aria-label="viewports"><Icon name="viewports" w={12} /></StatusButton>
    <Spacer $w={12} />
    <StatusButton $w={35}>
      <Icon name="person" w={11} />
      1:1
      <Spacer $w={2} />
      <Caret />
    </StatusButton>
    <StatusButton $w={15} aria-label="annotation"><Icon name="personStar" w={12} /></StatusButton>
    <StatusButton $w={14} aria-label="auto scale"><Icon name="personFaded" w={11} /></StatusButton>
    <Spacer $w={4} />
    <StatusButton $w={15} aria-label="settings"><Icon name="gear" w={12} /></StatusButton>
    <StatusButton $w={15} aria-label="lock"><Icon name="unlockGray" w={12} /></StatusButton>
    <StatusButton $w={14} aria-label="hardware"><Icon name="sphere" w={11} /></StatusButton>
    <StatusButton $w={20} $active>编组</StatusButton>
    <StatusButton $w={20}>基线</StatusButton>
    <StatusButton $w={20}>填充</StatusButton>
    <StatusButton $w={20}>加粗</StatusButton>
    <StatusButton $w={36}>动态标注</StatusButton>
    <Spacer $w={4} />
    <StatusButton $w={20} aria-label="isolate"><Icon name="bulb" w={12} /></StatusButton>
    <StatusButton $w={10} aria-label="more"><Caret $small /></StatusButton>
    <StatusButton $w={14} aria-label="clean screen"><Icon name="clean" w={12} /></StatusButton>
    <Spacer $w={3} />
  </StatusBar>
);

const App = () => {
  return (
    <Window>
      <GlobalStyle />
      <TitleBar />
      <RibbonBar />
      <Body>
        <Sidebar>
          <SidebarTitle>天...</SidebarTitle>
          <Menu>
            {menu.map((item) => (
              <li key={item}>
                <MenuButton>{item}</MenuButton>
              </li>
            ))}
          </Menu>
        </Sidebar>
        <Work>
          <DrawingRow>
            <Drawing>
              <DrawingView />
              <LayoutTabs>
                {["M2 1v6 M7 1L3 4l4 3z", "M6 1L2 4l4 3z", "M3 1l4 3-4 3z", "M2 1l4 3-4 3z M7 1v6"].map((d) => (
                  <StepButton key={d} aria-label="step">
                    <Svg $w={8} viewBox="0 0 8 8">
                      <path d={d} fill="#444" strokeWidth=".6" />
                    </Svg>
                  </StepButton>
                ))}
                <LayoutTab $active>模型</LayoutTab>
                <LayoutTab>布局1</LayoutTab>
                <Slash />
                <LayoutTab>布局2</LayoutTab>
                <Slash />
              </LayoutTabs>
            </Drawing>
            <SideTools>
              <Grip />
              <ToolGroups groups={sideTools} />
              <Grip />
              <ToolGroups groups={sideTools2} />
            </SideTools>
          </DrawingRow>
          <CommandPanel>
            <CommandGrip>
              <Svg $w={10} $h={3} viewBox="0 0 10 3">
                <path d="M0 1h10" stroke="#aaa" strokeDasharray="1 1" strokeWidth="2" />
              </Svg>
              <Svg $w={7} viewBox="0 0 7 7">
                <path d="M1 1l5 5 M6 1L1 6" stroke="#fff" strokeWidth="1.5" />
              </Svg>
              <Icon name="wrench" w={10} />
            </CommandGrip>
            <CommandBody>
              <History>{"加载天正菜单文件: D:\\Program Files\\TArch2014\\sys19x64\\tch.tmn"}</History>
              <Prompt>
                <Icon name="prompt" w={11} />
                <Caret $small $color="#999" />
                <CommandInput aria-label="command" placeholder="键入命令" />
              </Prompt>
            </CommandBody>
          </CommandPanel>
        </Work>
      </Body>
      <Status />
    </Window>
  );
};

export default App;
